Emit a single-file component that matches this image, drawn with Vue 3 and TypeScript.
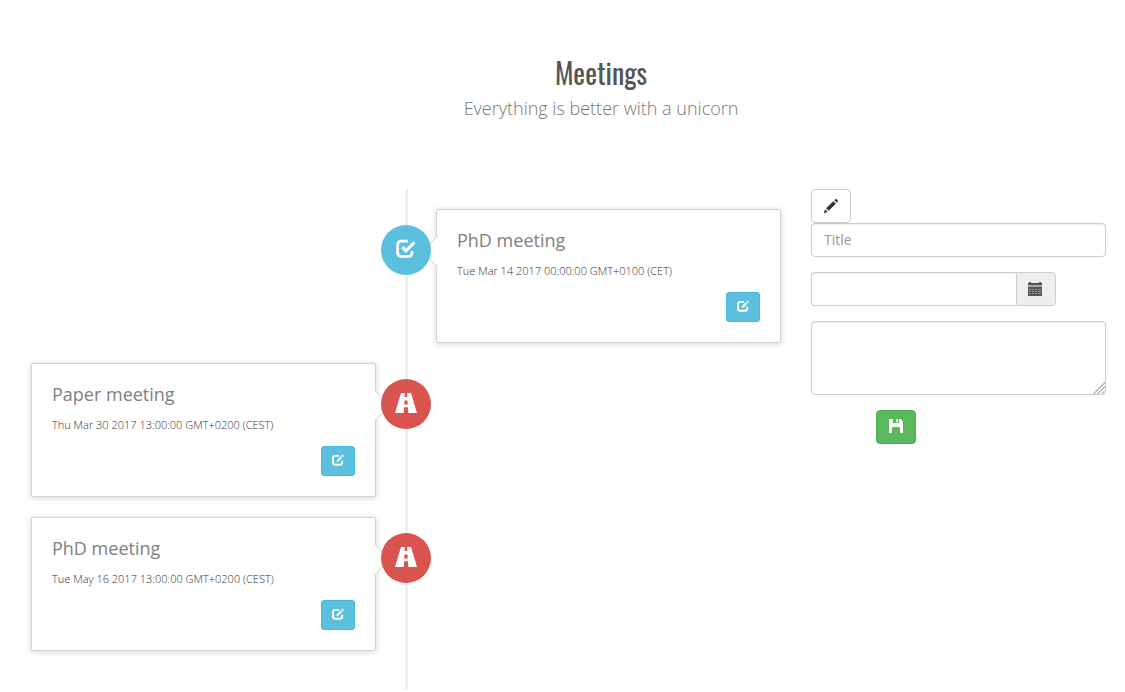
<script setup lang="ts">
import { ref } from 'vue'

interface Meeting {
  title: string
  date: string
  done: boolean
}

const meetings: Meeting[] = [
  { title: 'PhD meeting', date: 'Tue Mar 14 2017 00:00:00 GMT+0100 (CET)', done: true },
  { title: 'Paper meeting', date: 'Thu Mar 30 2017 13:00:00 GMT+0200 (CEST)', done: false },
  { title: 'PhD meeting', date: 'Tue May 16 2017 13:00:00 GMT+0200 (CEST)', done: false },
]

const title = ref('')
const date = ref('')
const notes = ref('')
</script>

<template>
  <main class="page">
    <header class="heading">
      <h1>Meetings</h1>
      <p>Everything is better with a unicorn</p>
    </header>

    <div class="columns">
      <ol class="timeline">
        <li v-for="(m, i) in meetings" :key="i" class="entry" :class="m.done ? 'entry-right' : 'entry-left'">
          <span class="badge" :class="m.done ? 'badge-done' : 'badge-open'">
            <svg v-if="m.done" width="20" height="20" viewBox="0 0 20 20" aria-hidden="true">
              <path d="M12 2.200H5A3.400 3.400 0 0 0 1.600 5.600V14A3.400 3.400 0 0 0 5 17.400H12.600A3.400 3.400 0 0 0 16 14V12" fill="none" stroke="#fff" stroke-width="2.800" />
              <path d="M6.200 8L10 11.800L18.400 3.400" fill="none" stroke="#fff" stroke-width="3.200" />
            </svg>
            <svg v-else width="24" height="20" viewBox="0 0 24 20" aria-hidden="true">
              <path fill="#fff" fill-rule="evenodd" d="M7 0H17L23 20H14.300L13.900 14.200H10.100L9.700 20H1ZM10.900 0L10.600 4H13.400L13.100 0ZM10.500 7.500L10.200 11.500H13.800L13.500 7.500Z" />
            </svg>
          </span>
          <article class="card">
            <h2>{{ m.title }}</h2>
            <time>{{ m.date }}</time>
            <button type="button" class="btn btn-info" aria-label="Edit meeting">
              <svg width="12" height="12" viewBox="0 0 12 12" aria-hidden="true">
                <path d="M7 1.900H3.200A2.200 2.200 0 0 0 1 4.100V8.600A2.200 2.200 0 0 0 3.200 10.800H8A2.200 2.200 0 0 0 10.200 8.600V6.800" fill="none" stroke="#fff" stroke-width="1.900" />
                <path d="M4.500 8L5.100 5.900L8.700 2.300L10.200 3.800L6.600 7.400ZM9.400 1.600L10.400 .6L12 2.200L11 3.200Z" fill="#fff" />
              </svg>
            </button>
          </article>
        </li>
      </ol>

      <form class="editor" @submit.prevent>
        <button type="button" class="btn btn-default" aria-label="New meeting">
          <svg width="14" height="14" viewBox="0 0 1200 1200" aria-hidden="true">
            <path transform="matrix(1 0 0 -1 0 1200)" fill="#333" d="M1011 1210q19 0 33 -13l153 -153q13 -14 13 -33t-13 -33l-99 -92l-214 214l95 96q13 14 32 14zM1013 800l-615 -614l-214 214l614 614zM317 96l-333 -112l110 335z" />
          </svg>
        </button>
        <input v-model="title" class="control" type="text" placeholder="Title" aria-label="Title" />
        <div class="date-group">
          <input v-model="date" class="control" type="text" aria-label="Date" />
          <button type="button" class="addon" aria-label="Choose a date">
            <svg width="14" height="14" viewBox="0 0 14 14" aria-hidden="true">
              <path fill="#555" d="M0 1H1V0H3V1H11V0H13V1H14V3H0Z" />
              <path fill="#aaa" d="M0 3H14V5H0Z" />
              <path fill="#555" d="M0 5H14V14H0Z" />
              <path fill="#999" d="M1 7H3V8H1ZM4 7H6V8H4ZM7 7H9V8H7ZM10 7H13V8H10ZM1 9H3V10H1ZM4 9H6V10H4ZM7 9H9V10H7ZM10 9H13V10H10ZM1 11H3V12H1ZM4 11H6V12H4ZM7 11H9V12H7ZM10 11H13V12H10Z" />
            </svg>
          </button>
        </div>
        <textarea v-model="notes" class="control notes" aria-label="Notes"></textarea>
        <button type="submit" class="btn btn-success" aria-label="Save meeting">
          <svg width="14" height="14" viewBox="0 0 14 14" aria-hidden="true">
            <path fill="#fff" fill-rule="evenodd" d="M0 0H4V4H10V0H11.500L14 2.500V14H11V8H3V14H0ZM7 0H9V3H7Z" />
          </svg>
        </button>
      </form>
    </div>
  </main>
</template>

<style>
body {
  margin: 0;
  background: #fff;
}
</style>

<style scoped>
* {
  box-sizing: border-box;
}

.page {
  font-family: "Open Sans", "Noto Sans", sans-serif;
  font-size: 14px;
  font-weight: 300;
  line-height: 20px;
  color: #333;
}

.heading {
  padding: 57px 0 68px 77px;
  text-align: center;
}

.heading h1 {
  margin: 0 0 6px;
  font-family: Oswald, "Roboto Condensed", "Liberation Sans Narrow", "Open Sans", sans-serif;
  font-size: 28px;
  font-weight: 400;
  line-height: 32px;
  color: #555;
}

.heading p {
  margin: 0;
  font-size: 18px;
  line-height: 26px;
  color: #777;
}

.columns {
  display: grid;
  grid-template-columns: 750fr 295fr;
  column-gap: 30px;
  align-items: start;
  padding: 0 19px 0 31px;
}

.timeline {
  display: flex;
  flex-direction: column;
  gap: 20px;
  margin: 0;
  padding: 20px 0 39px;
  list-style: none;
  background: linear-gradient(#eee, #eee) center top / 3px 100% no-repeat;
}

.entry {
  display: grid;
  grid-template-columns: 1fr 50px 1fr;
  column-gap: 5px;
  align-items: start;
}

.badge {
  z-index: 1;
  grid-area: 1 / 2;
  display: flex;
  align-items: center;
  justify-content: center;
  height: 50px;
  margin-top: 16px;
  padding-bottom: 2px;
  border-radius: 50%;
}

.badge-done {
  background: #5bc0de;
}

.badge-open {
  background: #d9534f;
}

.card {
  position: relative;
  display: flex;
  flex-direction: column;
  gap: 11px;
  padding: 20px;
  border: 1px solid #d4d4d4;
  border-radius: 2px;
  background: #fff;
  box-shadow: 0 1px 6px rgba(0, 0, 0, 0.175);
}

.entry-left .card {
  grid-area: 1 / 1;
}

.entry-right .card {
  grid-area: 1 / 3;
}

.card::before {
  content: "";
  position: absolute;
  top: 30px;
  width: 21px;
  height: 21px;
  border: 1px solid #d4d4d4;
  background: #fff;
  transform: rotate(45deg);
  clip-path: polygon(0 0, 100% 0, 100% 100%);
}

.entry-left .card::before {
  right: -11px;
}

.entry-right .card::before {
  left: -11px;
  clip-path: polygon(0 0, 0 100%, 100% 100%);
}

.card h2 {
  margin: 0;
  font-size: 18px;
  font-weight: 400;
  line-height: 20px;
  color: #808080;
}

.card time {
  font-size: 11px;
  line-height: 20px;
}

.btn {
  display: flex;
  align-items: center;
  justify-content: center;
  width: 40px;
  height: 34px;
  padding: 0;
  border: 1px solid;
  border-radius: 4px;
  cursor: pointer;
}

.btn-info {
  align-self: flex-end;
  width: 34px;
  height: 30px;
  padding-bottom: 2px;
  border-color: #46b8da;
  border-radius: 3px;
  background: #5bc0de;
}

.btn-default {
  border-color: #ccc;
  background: #fff;
}

.btn-success {
  margin-left: 65px;
  padding-bottom: 2px;
  border-color: #4cae4c;
  background: #5cb85c;
}

.control {
  display: block;
  width: 100%;
  height: 34px;
  padding: 5px 12px 7px;
  border: 1px solid #ccc;
  border-radius: 4px;
  background: #fff;
  box-shadow: inset 0 1px 1px rgba(0, 0, 0, 0.075);
  font: inherit;
  color: #555;
}

.control::placeholder {
  color: #999;
  font-weight: 400;
  opacity: 1;
}

.date-group {
  display: flex;
  max-width: 245px;
  margin: 15px 0;
}

.date-group .control {
  flex: 1;
  min-width: 0;
  border-right: 0;
  border-radius: 4px 0 0 4px;
}

.addon {
  display: flex;
  align-items: center;
  justify-content: center;
  width: 40px;
  padding: 0 2px 0 0;
  border: 1px solid #ccc;
  border-radius: 0 4px 4px 0;
  background: #eee;
  cursor: pointer;
}

.notes {
  height: 74px;
  margin-bottom: 15px;
  resize: vertical;
}

.notes::-webkit-resizer {
  background: linear-gradient(135deg, transparent 0 58%, #bbb 58% 64%, transparent 64% 71%, #bbb 71% 77%, transparent 77% 84%, #bbb 84% 90%, transparent 90%);
}
</style>
